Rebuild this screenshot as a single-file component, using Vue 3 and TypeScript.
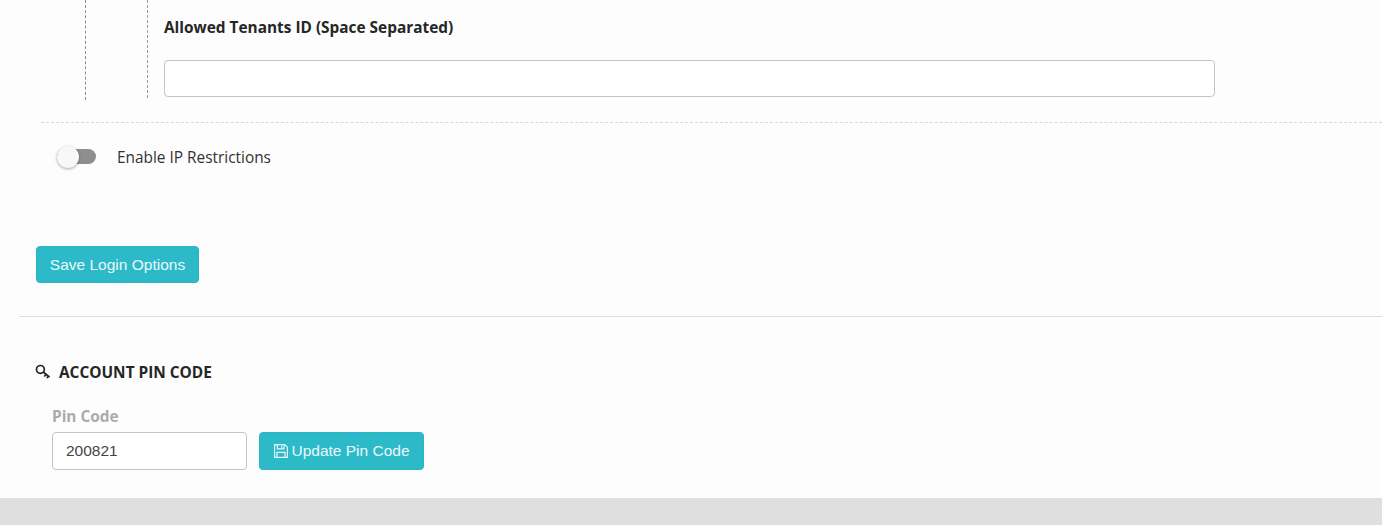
<script setup lang="ts">
const sectionTitle: string = 'Account Pin Code'
const pin: string = '200821'
</script>

<template>
  <div class="page">
    <main class="content">
      <div class="guide-outer">
        <div class="guide-inner">
          <label class="field-label">Allowed Tenants ID (Space Separated)</label>
          <input class="wide-input" type="text" />
        </div>
      </div>
      <div class="dash-rule"></div>
      <div class="toggle-row">
        <span class="toggle"><span class="knob"></span></span>
        <span class="toggle-text">Enable IP Restrictions</span>
      </div>
      <button class="btn save-btn" type="button">Save Login Options</button>
      <div class="rule"></div>
      <h3 class="section-title">
        <svg class="key" viewBox="0 0 16 16" width="16" height="16" fill="none" stroke="#222" stroke-width="1.7">
          <circle cx="5.4" cy="5.4" r="3.9" />
          <path d="M8.3 8 14.6 13.2M11 10.3l-1.7 2.2M13.3 12.2l-1.4 1.9" />
        </svg>
        <span>{{ sectionTitle }}</span>
      </h3>
      <div class="pin-block">
        <label class="pin-label">Pin Code</label>
        <div class="pin-row">
          <input class="pin-input" type="text" :value="pin" />
          <button class="btn pin-btn" type="button">
            <svg viewBox="0 0 16 16" width="16" height="16" fill="none" stroke="#e6f8fa" stroke-width="1.2">
              <path d="M1.6 1.6h10.2l2.6 2.6v10.2H1.6z" />
              <path d="M4.4 1.8v4h6.6v-4M8.6 2.8v2M4 14.2V9.4h8v4.8" />
            </svg>
            <span>Update Pin Code</span>
          </button>
        </div>
      </div>
    </main>
    <footer class="footer"></footer>
  </div>
</template>

<style>
html, body { margin: 0; padding: 0; background: #fdfdfd; }
</style>

<style scoped>
.page {
  width: 1382px;
  height: 525px;
  display: flex;
  flex-direction: column;
  overflow: hidden;
  background: #fdfdfd;
}
.content {
  height: 497.5px;
  box-sizing: border-box;
}
.guide-outer {
  margin-left: 85px;
  height: 99.5px;
  box-sizing: border-box;
  border-left: 1px dashed #8b8b8b;
  padding-left: 61px;
}
.guide-inner {
  height: 97.5px;
  box-sizing: border-box;
  border-left: 1px dashed #999;
  padding-left: 16px;
  padding-top: 18px;
}
.field-label {
  display: block;
  font: 700 15.4px/20px "Open Sans", sans-serif;
  color: #262626;
  height: 42px;
}
.wide-input {
  display: block;
  width: 1051px;
  height: 37px;
  box-sizing: border-box;
  background: #fff;
  border: 1px solid #c4c4c4;
  border-bottom-width: 1.5px;
  border-radius: 4px;
  outline: none;
}
.dash-rule {
  margin: 22px 0 0 41px;
  border-top: 1px dashed #d8d8d8;
}
.toggle-row {
  display: flex;
  align-items: center;
  margin: 23px 0 0 57px;
  height: 22px;
}
.toggle {
  position: relative;
  display: block;
  width: 39px;
  height: 15px;
  border-radius: 8px;
  background: #8f8f8f;
  margin-right: 21px;
}
.knob {
  position: absolute;
  left: 0;
  top: -3.5px;
  width: 22px;
  height: 22px;
  border-radius: 50%;
  background: #f8f8f8;
  box-shadow: 0 1px 3px rgba(0, 0, 0, 0.35);
}
.toggle-text {
  font: 400 15.4px/20px "Open Sans", sans-serif;
  color: #333;
  margin-top: 3px;
}
.btn {
  display: flex;
  align-items: center;
  justify-content: center;
  box-sizing: border-box;
  background: #2dbac8;
  color: #e9f9fb;
  border: 1px solid #2bb4c2;
  border-radius: 4px;
  font: 400 15.5px/20px "Liberation Sans", Arial, sans-serif;
  padding: 1px 0 0;
}
.save-btn {
  width: 163px;
  height: 37px;
  margin: 78px 0 0 36px;
}
.rule {
  margin: 33px 0 0 19px;
  border-top: 1px solid #dcdcdc;
}
.section-title {
  display: flex;
  align-items: center;
  margin: 44px 0 0 35px;
  height: 22px;
  font: 700 15.4px/20px "Open Sans", sans-serif;
  text-transform: uppercase;
  color: #262626;
}
.section-title span {
  margin-top: 3px;
}
.key {
  margin-right: 8px;
}
.pin-block {
  margin: 24px 0 0 52px;
}
.pin-label {
  display: block;
  height: 25px;
  font: 700 15.4px/20px "Open Sans", sans-serif;
  color: #ababab;
}
.pin-row {
  display: flex;
  gap: 12px;
}
.pin-input {
  width: 195px;
  height: 38px;
  box-sizing: border-box;
  padding: 0 13px;
  background: #fff;
  border: 1px solid #c4c4c4;
  border-radius: 4px;
  outline: none;
  font: 400 15.5px "Liberation Sans", Arial, sans-serif;
  color: #444;
}
.pin-btn {
  width: 165px;
  height: 38px;
  gap: 2px;
}
.footer {
  flex: 1;
  background: #dfdfdf;
}
</style>
